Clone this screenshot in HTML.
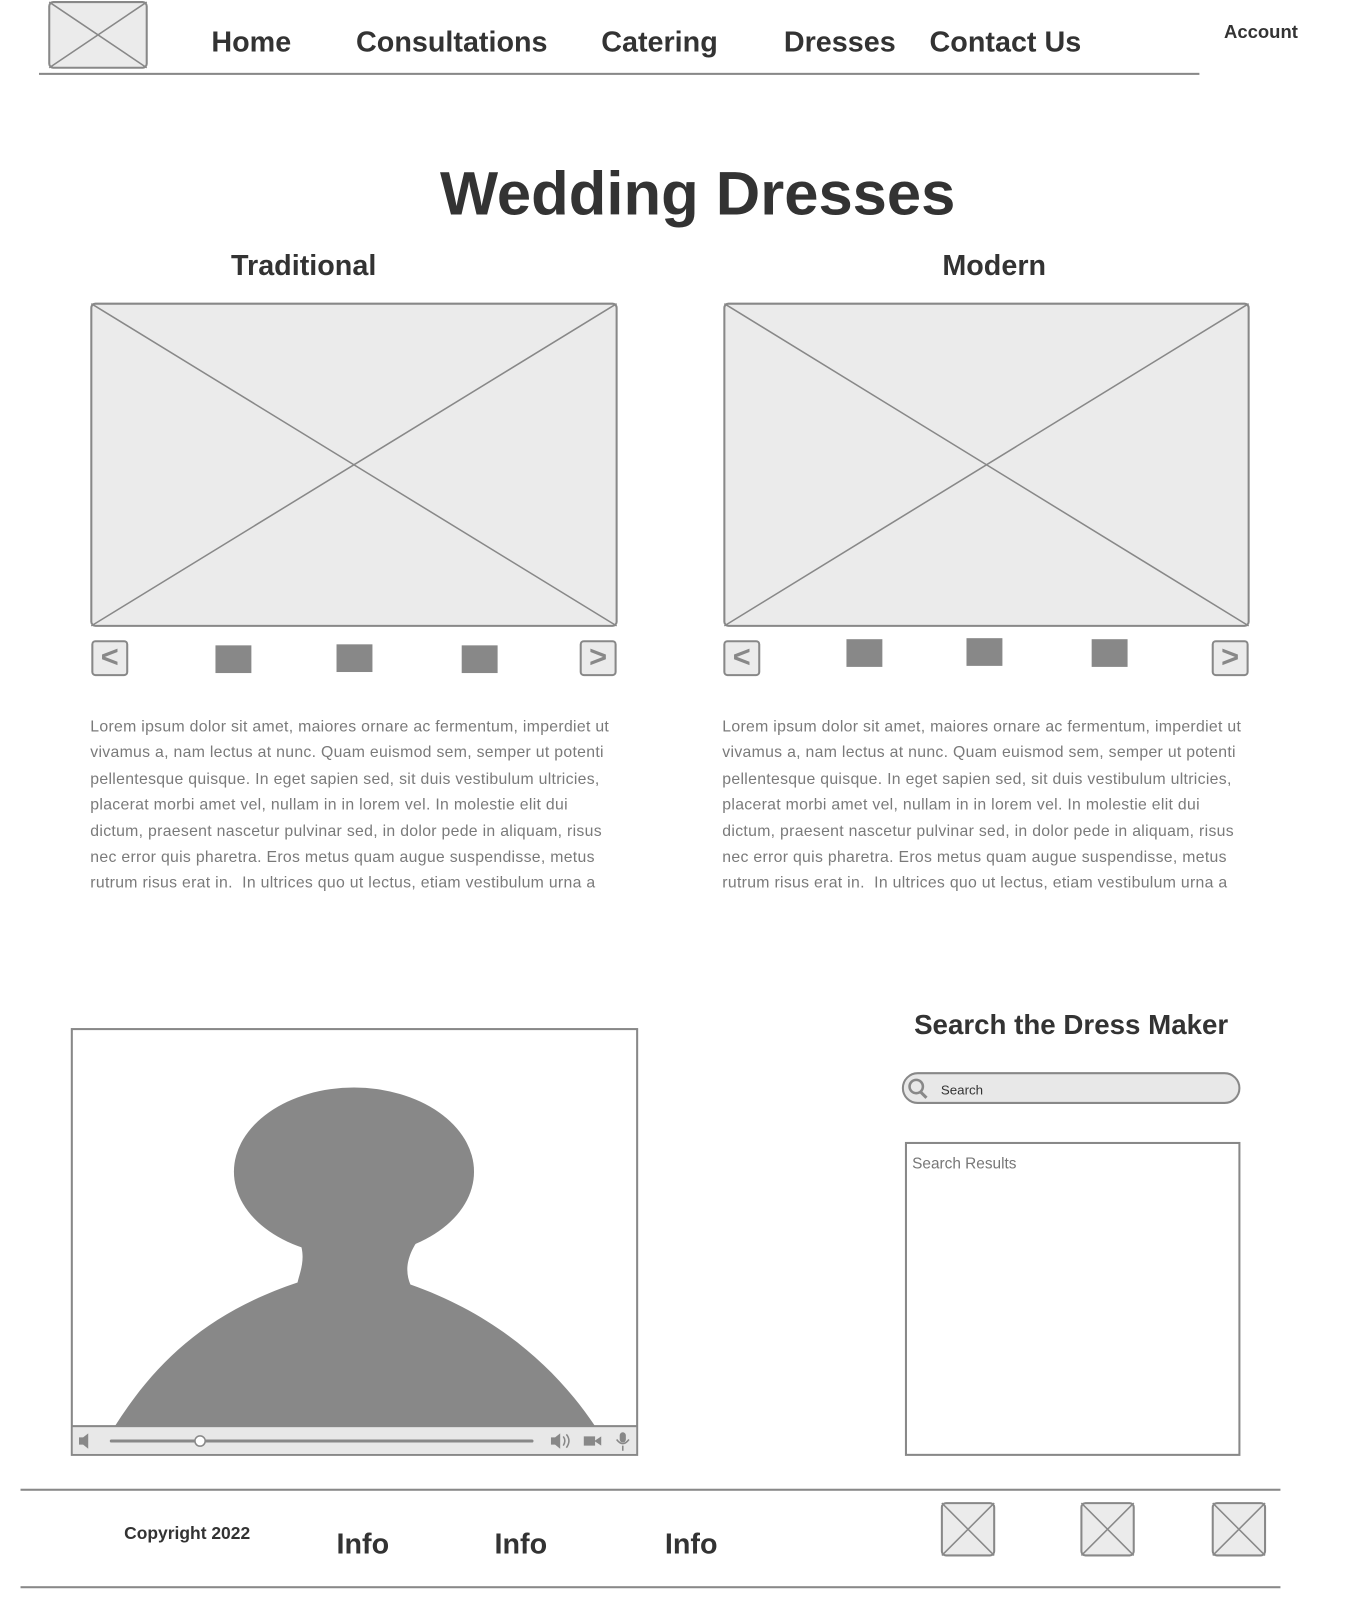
<!DOCTYPE html>
<html><head><meta charset="utf-8"><style>
html,body{margin:0;padding:0;background:#fff;overflow:hidden}
#w{position:absolute;left:0;top:0;width:1320px;height:1572px;transform:scale(1.026);transform-origin:0 0;font-family:"Liberation Sans",sans-serif;color:#333}
.a{position:absolute;white-space:nowrap}
.nav{font-size:28px;font-weight:bold;top:25px}
.p{position:absolute;font-size:15.4px;letter-spacing:0.3px;line-height:25.4px;color:#7a7a7a;width:540px;white-space:nowrap}
.btn{position:absolute;width:36px;height:35px;border:2px solid #888;border-radius:4px;background:#ebebeb;box-sizing:border-box;font-size:30px;font-weight:bold;color:#888;text-align:center;line-height:30px}
.sq{position:absolute;width:35px;height:27px;background:#888}
</style></head><body><div id="w">
<svg class="a" style="left:0;top:0" width="1320" height="1572">
<g fill="#ebebeb" stroke="#888" stroke-width="2">
<rect x="48" y="2" width="95" height="64" rx="4"/>
<rect x="89" y="296" width="512" height="314" rx="4"/>
<rect x="706" y="296" width="511" height="314" rx="4"/>
<rect x="918" y="1465" width="51" height="51" rx="4"/>
<rect x="1054" y="1465" width="51" height="51" rx="4"/>
<rect x="1182" y="1465" width="51" height="51" rx="4"/>
</g>
<g stroke="#888" stroke-width="1.5">
<path d="M48 2L143 66M143 2L48 66M89 296L601 610M601 296L89 610M706 296L1217 610M1217 296L706 610M918 1465L969 1516M969 1465L918 1516M1054 1465L1105 1516M1105 1465L1054 1516M1182 1465L1233 1516M1233 1465L1182 1516"/>
</g>
<rect x="38" y="71" width="1131" height="2" fill="#888"/>
<rect x="20" y="1451" width="1228" height="2" fill="#888"/>
<rect x="20" y="1546" width="1228" height="2" fill="#888"/>
<rect x="70" y="1003" width="551" height="415" fill="#fff" stroke="#888" stroke-width="2"/>
<ellipse cx="345" cy="1142" rx="117" ry="82" fill="#888"/>
<path d="M290 1205 C300 1225 292 1240 290 1250 C200 1280 150 1330 112 1390 L580 1390 C540 1330 480 1280 400 1252 C395 1240 395 1225 410 1205 Z" fill="#888"/>
<rect x="71" y="1390" width="549" height="27" fill="#e8e8e8"/>
<rect x="70" y="1389" width="551" height="2" fill="#888"/>
<rect x="107" y="1403" width="413" height="3" rx="1.5" fill="#888"/>
<circle cx="195" cy="1404.5" r="5" fill="#fff" stroke="#888" stroke-width="1.5"/>
<path d="M77 1401h4l5-4v15l-5-4h-4z" fill="#888"/>
<path d="M537 1401h4l5-4v15l-5-4h-4z" fill="#888"/>
<path d="M549 1400q3 4 0 9M552 1398q5 6 0 13" stroke="#888" stroke-width="1.5" fill="none"/>
<path d="M569 1400h11v9h-11zM580 1404l6-4v9l-6-4z" fill="#888"/>
<rect x="604" y="1396" width="6" height="10" rx="3" fill="#888"/>
<path d="M601 1403q6 8 12 0M607 1409v5" stroke="#888" stroke-width="1.5" fill="none"/>
<rect x="880" y="1046" width="328" height="29" rx="14.5" fill="#e8e8e8" stroke="#888" stroke-width="2"/>
<circle cx="893" cy="1059" r="6.5" fill="none" stroke="#888" stroke-width="2.5"/>
<path d="M897 1064l6 6" stroke="#888" stroke-width="3"/>
<rect x="883" y="1114" width="325" height="304" fill="#fff" stroke="#888" stroke-width="2"/>
</svg>
<div class="a nav" style="left:206px">Home</div>
<div class="a nav" style="left:347px">Consultations</div>
<div class="a nav" style="left:586px">Catering</div>
<div class="a nav" style="left:764px">Dresses</div>
<div class="a nav" style="left:906px">Contact Us</div>
<div class="a" style="left:1193px;top:21px;font-size:18px;font-weight:bold">Account</div>
<div class="a" style="left:0;width:1360px;text-align:center;top:154px;font-size:60px;font-weight:bold">Wedding Dresses</div>
<div class="a" style="left:196px;width:200px;text-align:center;top:243px;font-size:28px;font-weight:bold">Traditional</div>
<div class="a" style="left:869px;width:200px;text-align:center;top:243px;font-size:28px;font-weight:bold">Modern</div>
<div class="btn" style="left:89px;top:624px">&lt;</div>
<div class="btn" style="left:565px;top:624px">&gt;</div>
<div class="sq" style="left:210px;top:629px"></div>
<div class="sq" style="left:328px;top:628px"></div>
<div class="sq" style="left:450px;top:629px"></div>
<div class="btn" style="left:705px;top:624px">&lt;</div>
<div class="btn" style="left:1181px;top:624px">&gt;</div>
<div class="sq" style="left:825px;top:623px"></div>
<div class="sq" style="left:942px;top:622px"></div>
<div class="sq" style="left:1064px;top:623px"></div>
<div class="p" style="left:88px;top:696px">Lorem ipsum dolor sit amet, maiores ornare ac fermentum, imperdiet ut<br>vivamus a, nam lectus at nunc. Quam euismod sem, semper ut potenti<br>pellentesque quisque. In eget sapien sed, sit duis vestibulum ultricies,<br>placerat morbi amet vel, nullam in in lorem vel. In molestie elit dui<br>dictum, praesent nascetur pulvinar sed, in dolor pede in aliquam, risus<br>nec error quis pharetra. Eros metus quam augue suspendisse, metus<br>rutrum risus erat in.&nbsp; In ultrices quo ut lectus, etiam vestibulum urna a</div>
<div class="p" style="left:704px;top:696px">Lorem ipsum dolor sit amet, maiores ornare ac fermentum, imperdiet ut<br>vivamus a, nam lectus at nunc. Quam euismod sem, semper ut potenti<br>pellentesque quisque. In eget sapien sed, sit duis vestibulum ultricies,<br>placerat morbi amet vel, nullam in in lorem vel. In molestie elit dui<br>dictum, praesent nascetur pulvinar sed, in dolor pede in aliquam, risus<br>nec error quis pharetra. Eros metus quam augue suspendisse, metus<br>rutrum risus erat in.&nbsp; In ultrices quo ut lectus, etiam vestibulum urna a</div>
<div class="a" style="left:844px;width:400px;text-align:center;top:984px;font-size:27px;font-weight:bold">Search the Dress Maker</div>
<div class="a" style="left:917px;top:1055px;font-size:13px;color:#333">Search</div>
<div class="a" style="left:889px;top:1126px;font-size:15px;color:#777">Search Results</div>
<div class="a" style="left:121px;top:1485px;font-size:17px;font-weight:bold">Copyright 2022</div>
<div class="a" style="left:328px;top:1489px;font-size:28px;font-weight:bold">Info</div>
<div class="a" style="left:482px;top:1489px;font-size:28px;font-weight:bold">Info</div>
<div class="a" style="left:648px;top:1489px;font-size:28px;font-weight:bold">Info</div>
</div></body></html>
